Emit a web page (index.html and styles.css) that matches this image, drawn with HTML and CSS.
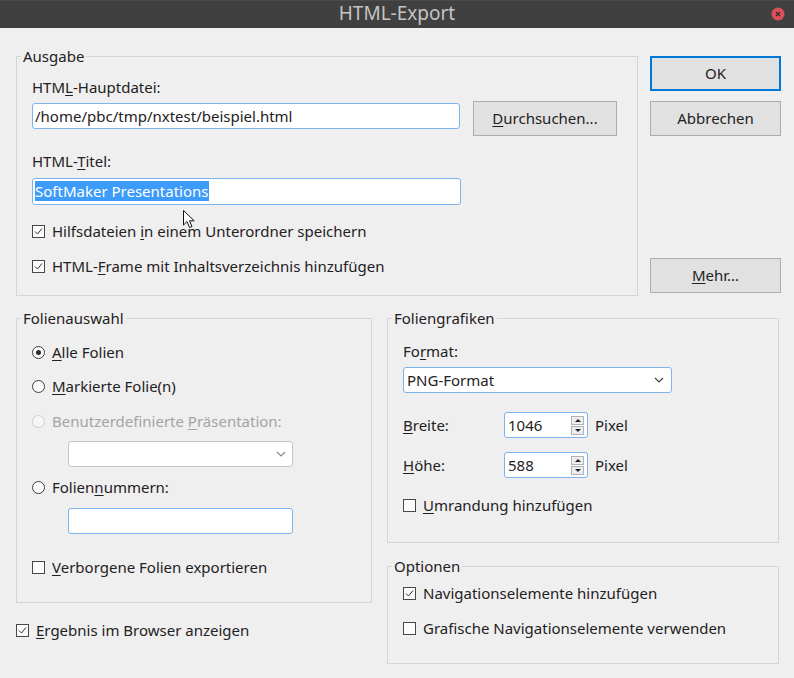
FILE: index.html
```html
<!DOCTYPE html>
<html lang="de">
<head>
  <meta charset="UTF-8">
  <title>HTML-Export</title>
  <link rel="stylesheet" href="styles.css">
</head>
<body>

<div class="dialog">
  <div class="titlebar">
    <span class="title">HTML-Export</span>
    <svg class="close" width="14" height="14" viewBox="0 0 14 14">
      <circle cx="7" cy="7" r="6.5" fill="#d9505a"/>
      <path d="M5 5 L9 9 M9 5 L5 9" stroke="#3a2a2a" stroke-width="1.3"/>
    </svg>
  </div>

  <div class="top">
    <fieldset class="group ausgabe">
      <legend>Ausgabe</legend>
      <div class="group-body">
        <div class="caption">HTM<u>L</u>-Hauptdatei:</div>
        <div class="path-row">
          <div class="field path">/home/pbc/tmp/nxtest/beispiel.html</div>
          <button class="btn browse"><u>D</u>urchsuchen...</button>
        </div>
        <div class="caption caption-title">HTML-<u>T</u>itel:</div>
        <div class="field title-field"><span class="selected">SoftMaker Presentations</span></div>
        <div class="check check-first"><span class="box"><svg width="11" height="11" viewBox="0 0 11 11"><path d="M2 5.5 L4.5 8 L9 2.5" fill="none" stroke="#333" stroke-width="1"/></svg></span><span>Hilfsdateien <u>i</u>n einem Unterordner speichern</span></div>
        <div class="check check-next"><span class="box"><svg width="11" height="11" viewBox="0 0 11 11"><path d="M2 5.5 L4.5 8 L9 2.5" fill="none" stroke="#333" stroke-width="1"/></svg></span><span>HTML-<u>F</u>rame mit Inhaltsverzeichnis hinzufügen</span></div>
      </div>
    </fieldset>

    <div class="actions">
      <button class="btn default">OK</button>
      <button class="btn cancel">Abbrechen</button>
      <button class="btn more"><u>M</u>ehr...</button>
    </div>
  </div>

  <div class="lower">
    <div class="col-left">
      <fieldset class="group">
        <legend>Folienauswahl</legend>
        <div class="group-body slides-body">
          <div class="check"><span class="radio on"></span><span><u>A</u>lle Folien</span></div>
          <div class="check radio-2"><span class="radio"></span><span><u>M</u>arkierte Folie(n)</span></div>
          <div class="check radio-3 disabled"><span class="radio"></span><span>Benutzerdefinierte <u>P</u>räsentation:</span></div>
          <div class="combo combo-off">
            <svg width="10" height="6" viewBox="0 0 10 6"><path d="M1 1 L5 5 L9 1" fill="none" stroke="#8a8a8a" stroke-width="1.2"/></svg>
          </div>
          <div class="check radio-4"><span class="radio"></span><span>Folien<u>n</u>ummern:</span></div>
          <div class="field numbers"></div>
          <div class="check hidden-slides"><span class="box"></span><span><u>V</u>erborgene Folien exportieren</span></div>
        </div>
      </fieldset>
      <div class="check browser"><span class="box"><svg width="11" height="11" viewBox="0 0 11 11"><path d="M2 5.5 L4.5 8 L9 2.5" fill="none" stroke="#333" stroke-width="1"/></svg></span><span><u>E</u>rgebnis im Browser anzeigen</span></div>
    </div>

    <div class="col-right">
      <fieldset class="group">
        <legend>Foliengrafiken</legend>
        <div class="group-body graphics-body">
          <div class="caption">Fo<u>r</u>mat:</div>
          <div class="combo format">
            <span>PNG-Format</span>
            <svg width="10" height="6" viewBox="0 0 10 6"><path d="M1 1 L5 5 L9 1" fill="none" stroke="#444" stroke-width="1.2"/></svg>
          </div>
          <div class="spin-row width-row">
            <span class="spin-label"><u>B</u>reite:</span>
            <div class="spin"><span>1046</span><span class="spin-btns"><span><i class="up"></i></span><span><i class="down"></i></span></span></div>
            <span class="unit">Pixel</span>
          </div>
          <div class="spin-row height-row">
            <span class="spin-label"><u>H</u>öhe:</span>
            <div class="spin"><span>588</span><span class="spin-btns"><span><i class="up"></i></span><span><i class="down"></i></span></span></div>
            <span class="unit">Pixel</span>
          </div>
          <div class="check border-check"><span class="box"></span><span><u>U</u>mrandung hinzufügen</span></div>
        </div>
      </fieldset>

      <fieldset class="group options">
        <legend>Optionen</legend>
        <div class="group-body options-body">
          <div class="check"><span class="box"><svg width="11" height="11" viewBox="0 0 11 11"><path d="M2 5.5 L4.5 8 L9 2.5" fill="none" stroke="#333" stroke-width="1"/></svg></span><span>Navigationselemente hinzufügen</span></div>
          <div class="check check-next"><span class="box"></span><span>Grafische Navigationselemente verwenden</span></div>
        </div>
      </fieldset>
    </div>
  </div>

  <svg class="pointer" width="14" height="19" viewBox="0 0 14 19">
    <path d="M0.5 0.5 L0.5 15 L4 11.6 L6.6 17.5 L9 16.5 L6.5 10.8 L11.2 10.8 Z" fill="#fff" stroke="#111" stroke-width="1"/>
  </svg>
</div>

</body>
</html>
```

FILE: styles.css
```css
* {
  box-sizing: border-box;
}

body {
  margin: 0;
  background-color: #efefef;
  font-family: "Noto Sans", "Open Sans", sans-serif;
  font-size: 15px;
  line-height: 19px;
  color: #1f2123;
}

.dialog {
  position: relative;
  width: 794px;
  height: 678px;
}

.titlebar {
  position: relative;
  height: 28px;
  background-color: #404040;
  border-top: 1px solid #4b4b4b;
  display: flex;
  justify-content: center;
  align-items: center;
  padding-bottom: 3px;
}

.title {
  color: #c4c4c4;
  font-size: 19px;
  line-height: 24px;
}

.close {
  position: absolute;
  right: 9px;
  top: 6px;
}

/* group boxes */
.group {
  margin: 0;
  padding: 0;
  min-width: 0;
  border: 1px solid #d5d5d5;
}

.group legend {
  margin-left: 4px;
  padding: 0 2px;
  line-height: 19px;
}

.group-body {
  padding: 12px 19px 19px 15px;
}

u {
  text-underline-offset: 2px;
}

/* top row */
.top {
  display: flex;
  gap: 12px;
  padding: 19px 0 0 16px;
}

.ausgabe {
  width: 622px;
}

.path-row {
  display: flex;
  align-items: flex-start;
  margin-top: 4px;
}

.field {
  height: 26px;
  background-color: #fff;
  border: 1px solid #7db3ec;
  border-radius: 3px;
  padding: 0 2px;
  line-height: 24px;
  white-space: nowrap;
}

.path {
  width: 428px;
  margin-top: 2px;
}

.caption-title {
  margin-top: 16px;
}

.title-field {
  width: 429px;
  height: 27px;
  margin-top: 7px;
  padding-top: 2px;
  line-height: 20px;
}

.selected {
  display: inline-block;
  background-color: #3d9bfa;
  color: #fff;
  padding-right: 1px;
}

.btn {
  height: 35px;
  padding: 0;
  background-color: #e1e1e1;
  border: 1px solid #adadad;
  font: inherit;
  color: inherit;
}

.browse {
  width: 144px;
  margin-left: 13px;
}

.actions {
  width: 131px;
  display: flex;
  flex-direction: column;
  padding-top: 9px;
}

.btn.default {
  border: 2px solid #0078d7;
}

.cancel {
  margin-top: 10px;
}

.more {
  margin-top: 122px;
}

/* checkboxes and radios */
.check {
  display: flex;
  align-items: center;
  gap: 7px;
  white-space: nowrap;
}

.check-first {
  margin-top: 17px;
}

.check-next {
  margin-top: 16px;
}

.box {
  flex: none;
  width: 13px;
  height: 13px;
  border: 1px solid #474747;
  background-color: #fbfbfb;
  display: flex;
}

.radio {
  flex: none;
  width: 13px;
  height: 13px;
  border: 1px solid #3e3e3e;
  border-radius: 50%;
  background-color: #fbfbfb;
  display: flex;
  justify-content: center;
  align-items: center;
}

.radio.on::after {
  content: "";
  width: 5px;
  height: 5px;
  border-radius: 50%;
  background-color: #2b2b2b;
}

.disabled {
  color: #a4a4a4;
}

.disabled .radio {
  border-color: #cdcdcd;
  background-color: #f6f6f6;
}

/* lower part */
.lower {
  display: flex;
  gap: 15px;
  padding: 13px 0 0 16px;
}

.col-left {
  width: 356px;
}

.col-right {
  width: 392px;
}

.slides-body {
  padding: 15px 15px 25px 15px;
}

.radio-2 {
  margin-top: 15px;
}

.radio-3 {
  margin-top: 16px;
}

.radio-4 {
  margin-top: 11px;
}

.combo {
  height: 26px;
  background-color: #fff;
  border: 1px solid #7db3ec;
  border-radius: 3px;
  display: flex;
  justify-content: space-between;
  align-items: center;
  padding: 0 7px 0 3px;
}

.combo-off {
  width: 225px;
  margin: 10px 0 0 36px;
  border-color: #c6c6c6;
  justify-content: flex-end;
  padding-right: 6px;
}

.numbers {
  width: 225px;
  margin: 11px 0 0 36px;
}

.hidden-slides {
  margin-top: 24px;
}

.browser {
  margin-top: 18px;
}

.graphics-body {
  padding: 14px 15px 27px 15px;
}

.format {
  width: 269px;
  margin-top: 6px;
}

.spin-row {
  display: flex;
  align-items: center;
}

.width-row {
  margin-top: 19px;
}

.height-row {
  margin-top: 14px;
}

.spin-label {
  width: 101px;
}

.spin {
  width: 84px;
  height: 26px;
  background-color: #fff;
  border: 1px solid #7db3ec;
  border-radius: 3px;
  display: flex;
  justify-content: space-between;
  align-items: center;
  padding: 0 3px 0 3px;
}

.spin-btns {
  display: flex;
  flex-direction: column;
  gap: 1px;
}

.spin-btns span {
  width: 13px;
  height: 9px;
  border: 1px solid #aab2be;
  background-color: #ededed;
  display: flex;
  justify-content: center;
  align-items: center;
}

.spin-btns i {
  width: 0;
  height: 0;
  border-left: 3px solid transparent;
  border-right: 3px solid transparent;
}

.spin-btns .up {
  border-bottom: 3px solid #1e1e1e;
}

.spin-btns .down {
  border-top: 3px solid #1e1e1e;
}

.unit {
  margin-left: 7px;
}

.border-check {
  margin-top: 18px;
}

.options {
  margin-top: 14px;
}

.options-body {
  padding: 8px 15px 25px 15px;
}

/* mouse pointer over the dialog */
.pointer {
  position: absolute;
  left: 183px;
  top: 210px;
}
```
